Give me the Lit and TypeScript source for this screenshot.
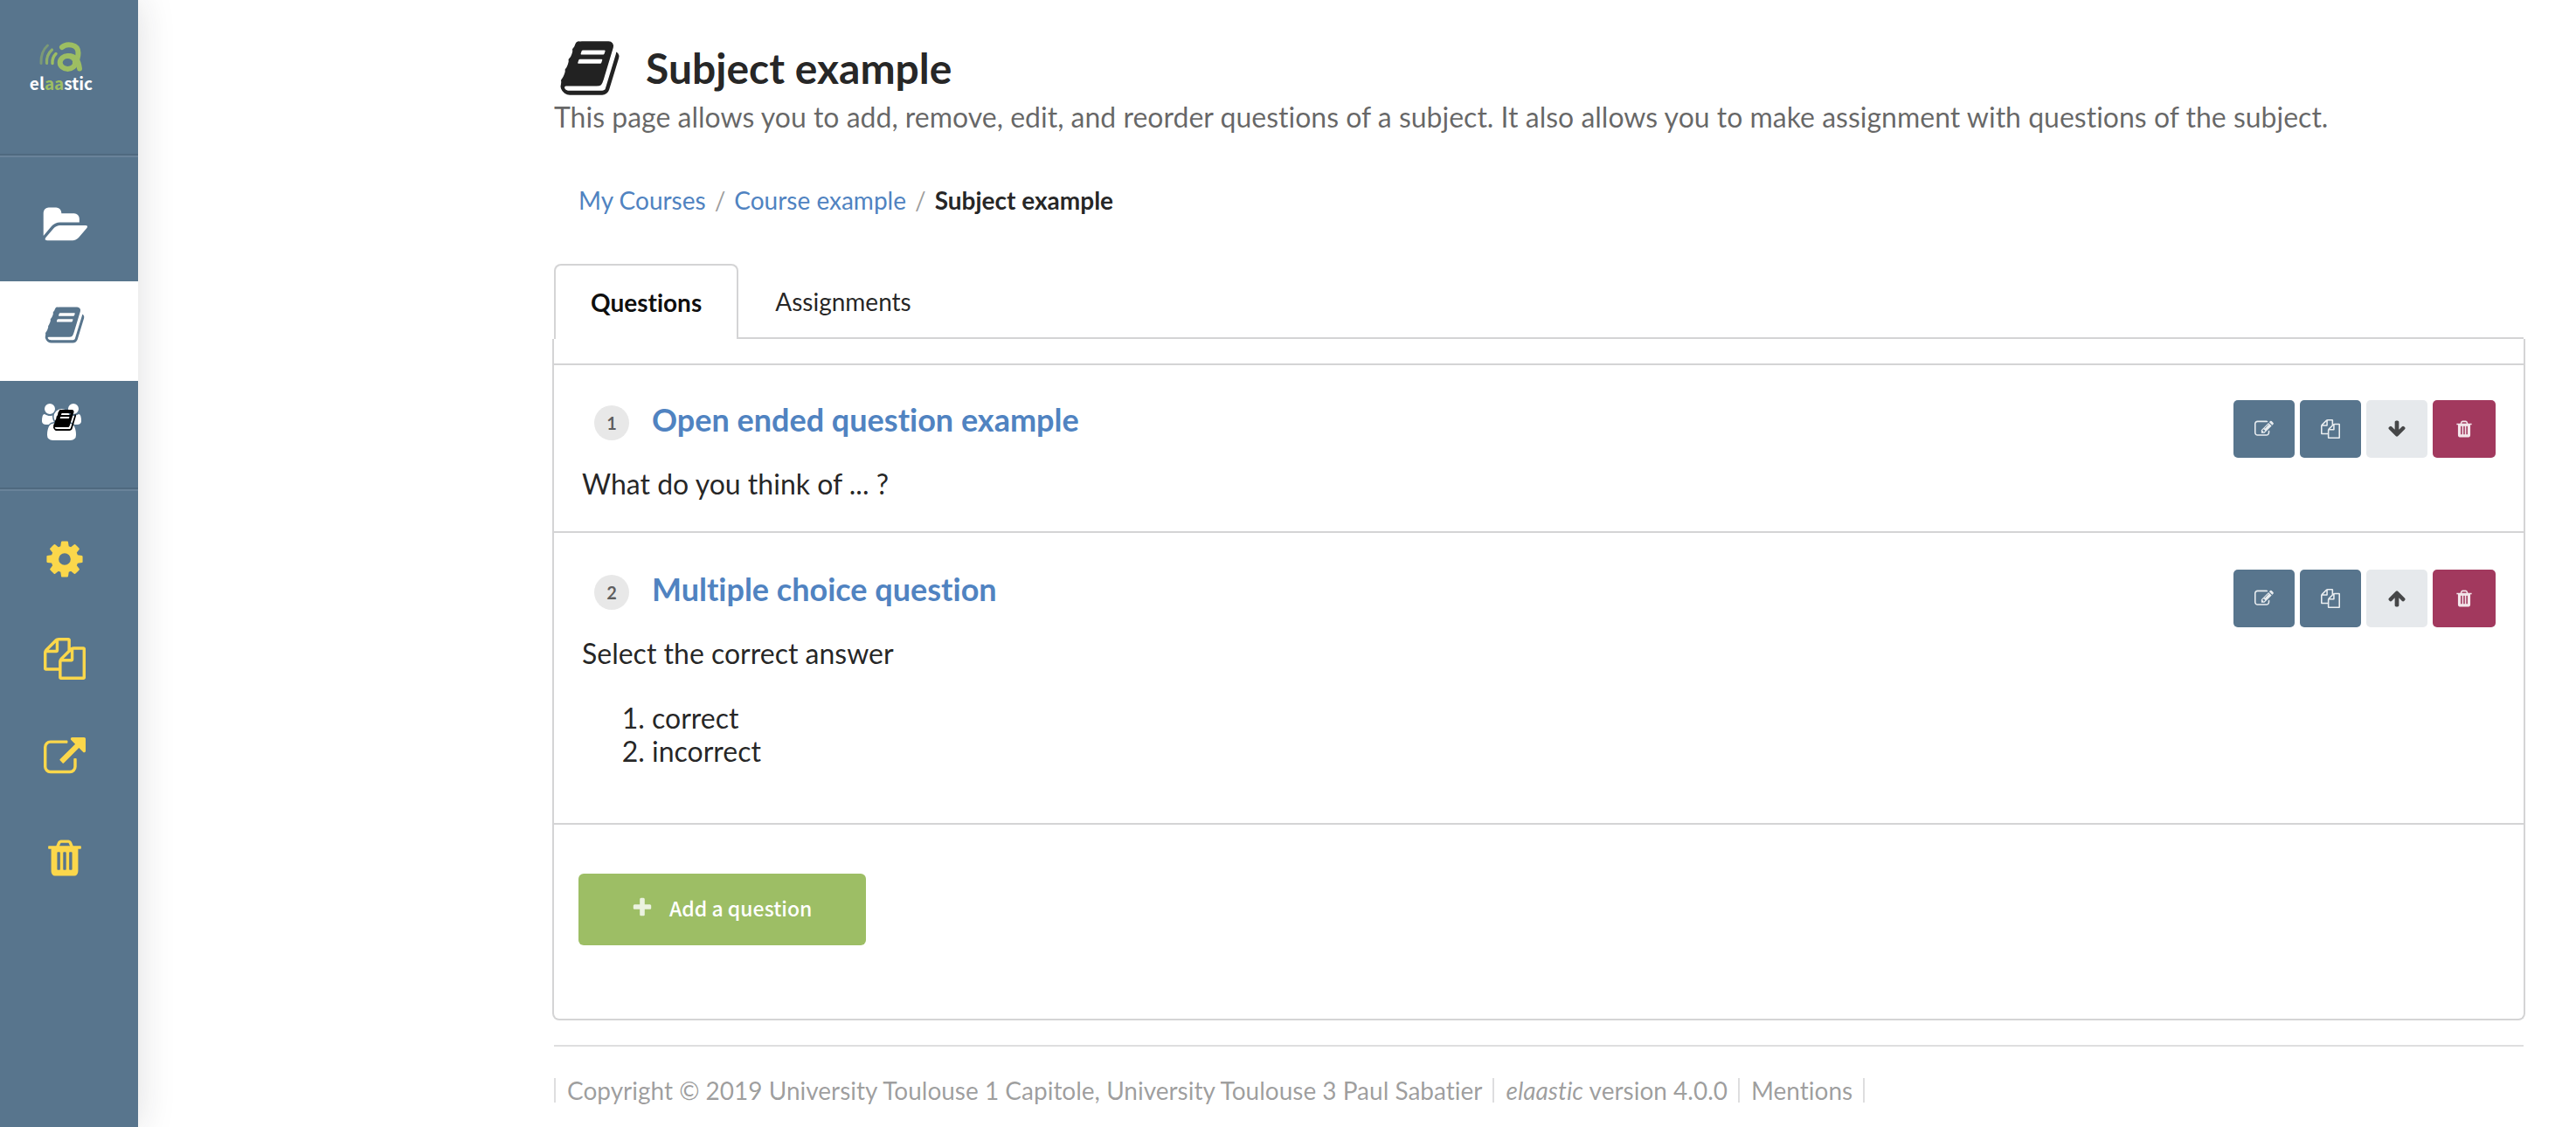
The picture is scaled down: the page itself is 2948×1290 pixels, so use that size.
import { LitElement, html, css, svg, nothing } from "lit";
import { customElement, property } from "lit/decorators.js";

type Glyph = { box: string; path: string };

const BOOK =
  "M1703 478q40 57 18 129l-275 906q-19 64-76.5 107.5t-122.5 43.5h-923q-77 0-148.5-53.5t-99.5-131.5q-24-67-2-127 0-4 3-27t4-37q1-8-3-21.5t-3-19.5q2-11 8-21t16.5-23.5 16.5-23.5q23-38 45-91.5t30-91.5q3-10 .5-30t-.5-28q3-11 17-28t17-23q21-36 42-92t25-90q1-9-2.5-32t.5-28q4-13 22-30.5t22-22.5q19-26 42.5-84.5t27.5-96.5q1-8-3-25.5t-2-26.5q2-8 9-18t18-23 17-21q8-12 16.5-30.5t15-35 16-36 19.5-32 26.5-23.5 36-11.5 47.5 5.5l-1 3q38-9 51-9h761q74 0 114 56t18 130l-274 906q-36 119-71.5 153.5t-128.5 34.5h-869q-27 0-38 15-11 16-1 43 24 70 144 70h923q29 0 56-15.5t35-41.5l300-987q7-22 5-57 38 15 59 43zm-1064 2q-4 13 2 22.5t20 9.5h608q13 0 25.5-9.5t16.5-22.5l21-64q4-13-2-22.5t-20-9.5h-608q-13 0-25.5 9.5t-16.5 22.5zm-83 256q-4 13 2 22.5t20 9.5h608q13 0 25.5-9.5t16.5-22.5l21-64q4-13-2-22.5t-20-9.5h-608q-13 0-25.5 9.5t-16.5 22.5z";

const SQUARE = "0 0 1792 1792";

const GLYPHS: Record<string, Glyph> = {
  folder: {
    box: "0 0 1943 1792",
    path: "M1943 952q0 31-31 66l-336 396q-43 51-120.5 86.5t-143.5 35.5h-1088q-34 0-60.5-13t-26.5-43q0-31 31-66l336-396q43-51 120.5-86.5t143.5-35.5h1088q34 0 60.5 13t26.5 43zm-343-344v160h-832q-94 0-197 47.5t-164 119.5l-337 396-5 6q0-4-.5-12.5t-.5-12.5v-960q0-92 66-158t158-66h320q92 0 158 66t66 158v32h544q92 0 158 66t66 158z",
  },
  book: { box: SQUARE, path: BOOK },
  users: {
    box: "0 0 1920 1792",
    path: "M593 896q-162 5-265 128h-134q-82 0-138-40.5t-56-118.5q0-353 124-353 6 0 43.5 21t97.5 42.5 119 21.5q67 0 133-23-5 37-5 66 0 139 81 256zm1071 637q0 120-73 189.5t-194 69.5h-874q-121 0-194-69.5t-73-189.5q0-53 3.5-103.5t14-109 26.5-108.5 43-97.5 62-81 85.5-53.5 111.5-20q10 0 43 21.5t73 48 107 48 135 21.5 135-21.5 107-48 73-48 43-21.5q61 0 111.5 20t85.5 53.5 62 81 43 97.5 26.5 108.5 14 109 3.5 103.5zm-1024-1277q0 106-75 181t-181 75-181-75-75-181 75-181 181-75 181 75 75 181zm704 384q0 159-112.5 271.5t-271.5 112.5-271.5-112.5-112.5-271.5 112.5-271.5 271.5-112.5 271.5 112.5 112.5 271.5zm576 225q0 78-56 118.5t-138 40.5h-134q-103-123-265-128 81-117 81-256 0-29-5-66 66 23 133 23 59 0 119-21.5t97.5-42.5 43.5-21q124 0 124 353zm-128-609q0 106-75 181t-181 75-181-75-75-181 75-181 181-75 181 75 75 181z",
  },
  cog: {
    box: SQUARE,
    path: "M1152 896q0-106-75-181t-181-75-181 75-75 181 75 181 181 75 181-75 75-181zm512-109v222q0 12-8 23t-20 13l-185 28q-19 54-39 91 35 50 107 138 10 12 10 25t-9 23q-27 37-99 108t-94 71q-12 0-26-9l-138-108q-44 23-91 38-16 136-29 186-7 28-36 28h-222q-14 0-24.5-8.5t-11.5-21.5l-28-184q-49-16-90-37l-141 107q-10 9-25 9-14 0-25-11-126-114-165-168-7-10-7-23 0-12 8-23 15-21 51-66.5t54-70.5q-27-50-41-99l-183-27q-13-2-21-12.5t-8-23.5v-222q0-12 8-23t19-13l186-28q14-46 39-92-40-57-107-138-10-12-10-24 0-10 9-23 26-36 98.5-107.5t94.5-71.5q13 0 26 10l138 107q44-23 91-38 16-136 29-186 7-28 36-28h222q14 0 24.5 8.5t11.5 21.5l28 184q49 16 90 37l142-107q9-9 24-9 13 0 25 10 129 119 165 170 7 8 7 22 0 12-8 23-15 21-51 66.5t-54 70.5q26 50 41 98l183 28q13 2 21 12.5t8 23.5z",
  },
  copy: {
    box: SQUARE,
    path: "M1696 384q40 0 68 28t28 68v1216q0 40-28 68t-68 28h-960q-40 0-68-28t-28-68v-288h-544q-40 0-68-28t-28-68v-672q0-40 20-88t48-76l408-408q28-28 76-48t88-20h416q40 0 68 28t28 68v328q68-40 128-40h416zm-544 213l-299 299h299v-299zm-640-384l-299 299h299v-299zm196 647l316-316v-416h-384v416q0 40-28 68t-68 28h-416v640h512v-256q0-40 20-88t48-76zm956 804v-1152h-384v416q0 40-28 68t-68 28h-416v640h896z",
  },
  external: {
    box: SQUARE,
    path: "M1408 928v320q0 119-84.5 203.5t-203.5 84.5h-832q-119 0-203.5-84.5t-84.5-203.5v-832q0-119 84.5-203.5t203.5-84.5h704q14 0 23 9t9 23v64q0 14-9 23t-23 9h-704q-66 0-113 47t-47 113v832q0 66 47 113t113 47h832q66 0 113-47t47-113v-320q0-14 9-23t23-9h64q14 0 23 9t9 23zm384-864v512q0 26-19 45t-45 19-45-19l-176-176-652 652q-10 10-23 10t-23-10l-114-114q-10-10-10-23t10-23l652-652-176-176q-19-19-19-45t19-45 45-19h512q26 0 45 19t19 45z",
  },
  trash: {
    box: SQUARE,
    path: "M704 1376v-704q0-14-9-23t-23-9h-64q-14 0-23 9t-9 23v704q0 14 9 23t23 9h64q14 0 23-9t9-23zm256 0v-704q0-14-9-23t-23-9h-64q-14 0-23 9t-9 23v704q0 14 9 23t23 9h64q14 0 23-9t9-23zm256 0v-704q0-14-9-23t-23-9h-64q-14 0-23 9t-9 23v704q0 14 9 23t23 9h64q14 0 23-9t9-23zm-544-992h448l-48-117q-7-9-17-11h-317q-10 2-17 11zm928 32v64q0 14-9 23t-23 9h-96v948q0 83-47 143.5t-113 60.5h-832q-66 0-113-58.5t-47-141.5v-952h-96q-14 0-23-9t-9-23v-64q0-14 9-23t23-9h309l70-167q15-37 54-63t79-26h320q40 0 79 26t54 63l70 167h309q14 0 23 9t9 23z",
  },
  edit: {
    box: SQUARE,
    path: "M888 1184l116-116-152-152-116 116v56h96v96h56zm440-720q-16-16-33 1l-350 350q-17 17-1 33t33-1l350-350q17-17 1-33zm80 594v190q0 119-84.5 203.5t-203.5 84.5h-832q-119 0-203.5-84.5t-84.5-203.5v-832q0-119 84.5-203.5t203.5-84.5h832q63 0 117 25 15 7 18 23 3 17-9 29l-49 49q-14 14-32 8-23-6-45-6h-832q-66 0-113 47t-47 113v832q0 66 47 113t113 47h832q66 0 113-47t47-113v-126q0-13 9-22l64-64q15-15 35-7t20 29zm-96-738l288 288-672 672h-288v-288zm444 132l-92 92-288-288 92-92q28-28 68-28t68 28l152 152q28 28 28 68t-28 68z",
  },
  plus: {
    box: SQUARE,
    path: "M1600 736v192q0 40-28 68t-68 28h-416v416q0 40-28 68t-68 28h-192q-40 0-68-28t-28-68v-416h-416q-40 0-68-28t-28-68v-192q0-40 28-68t68-28h416v-416q0-40 28-68t68-28h192q40 0 68 28t28 68v416h416q40 0 68 28t28 68z",
  },
  down: {
    box: SQUARE,
    path: "M1675 832q0 53-37 90l-651 652q-39 37-91 37-53 0-90-37l-651-652q-38-36-38-90 0-53 38-91l74-75q39-37 91-37 53 0 90 37l294 294v-704q0-52 38-90t90-38h128q52 0 90 38t38 90v704l294-294q37-37 90-37 52 0 91 37l75 75q37 39 37 91z",
  },
  up: {
    box: SQUARE,
    path: "M1675 971q0 51-37 90l-75 75q-38 38-91 38-54 0-90-38l-294-293v704q0 52-37.5 84.5t-90.5 32.5h-128q-53 0-90.5-32.5t-37.5-84.5v-704l-294 293q-36 38-90 38t-90-38l-75-75q-38-38-38-90 0-53 38-91l651-651q35-37 90-37 54 0 91 37l651 651q37 39 37 91z",
  },
};

const icon = (name: string, cls = "") => {
  const g = GLYPHS[name];
  return html`<svg class="icon ${cls}" viewBox=${g.box} aria-hidden="true">
    ${svg`<path d=${g.path}></path>`}
  </svg>`;
};

interface Question {
  rank: number;
  title: string;
  text: string;
  choices?: string[];
  move: "up" | "down";
}

const QUESTIONS: Question[] = [
  { rank: 1, title: "Open ended question example", text: "What do you think of ... ?", move: "down" },
  {
    rank: 2,
    title: "Multiple choice question",
    text: "Select the correct answer",
    choices: ["correct", "incorrect"],
    move: "up",
  },
];

@customElement("side-bar")
class SideBar extends LitElement {
  static styles = css`
    :host {
      display: block;
      background: #58758d;
      box-shadow: 0 0 40px rgba(34, 36, 38, 0.15);
      font-family: "Noto Sans CJK SC", "Noto Sans", sans-serif;
    }
    .logo {
      display: block;
      height: 176px;
    }
    .logo svg {
      display: block;
      width: 158px;
      height: 120px;
    }
    .section {
      display: flex;
      flex-direction: column;
      padding: 28px 0 8px;
      border-top: 2px solid #4f697f;
      box-shadow: inset 0 2px 0 #69839a;
    }
    .section::before {
      content: "";
      height: 2px;
    }
    .item {
      position: relative;
      display: block;
      box-sizing: border-box;
      height: 114px;
      padding: 26px 50px 40px;
      border: 0;
      background: none;
      color: #fff;
      cursor: pointer;
      text-align: left;
    }
    .item.active {
      background: #fff;
      color: #58758d;
    }
    .item.tool {
      color: #fbd74b;
    }
    .item.wide {
      padding-left: 48px;
    }
    .icon {
      display: block;
      width: 48px;
      height: 48px;
      fill: currentColor;
    }
    .icon.folder {
      width: 52px;
    }
    .icon.users {
      width: 45px;
      height: 42px;
    }
    .icon.corner {
      position: absolute;
      left: 60px;
      top: 31px;
      width: 28px;
      height: 28px;
      color: #000;
    }
    .mark {
      font-size: 19px;
      font-weight: 700;
      fill: #fff;
    }
    .accent {
      fill: #9dbe62;
    }
  `;

  render() {
    return html`
      <a class="logo" href="#" aria-label="elaastic">
        <svg viewBox="0 0 158 120">
          <g fill="none" stroke="#9dbe62" stroke-linecap="round">
            <path d="M47 72.500C46.500 64 49 57 54.500 52" stroke-width="3" opacity="0.5"></path>
            <path d="M53.500 72.500C53 66 55 61 59.500 57" stroke-width="3.200" opacity="0.8"></path>
            <path d="M60 72.500C59.700 68 61 64.500 64 61.500" stroke-width="3.400"></path>
            <ellipse cx="77.500" cy="71.500" rx="8.800" ry="7.500" stroke-width="6"></ellipse>
            <path d="M71 54C76 49.500 89.500 50 89.500 60.500C89.500 66 88 69 86 71.500" stroke-width="6"></path>
            <path d="M78 64C87 64 90 70 91 78.500" stroke-width="6"></path>
          </g>
          <text class="mark" x="70" y="103" text-anchor="middle">el<tspan class="accent">aa</tspan>stic</text>
        </svg>
      </a>
      <nav class="section" aria-label="Main">
        <a class="item wide" href="#" aria-label="Courses">${icon("folder", "folder")}</a>
        <a class="item active" href="#" aria-label="Subjects">${icon("book")}</a>
        <a class="item wide" href="#" aria-label="Assignments">
          ${icon("users", "users")}${icon("book", "corner")}
        </a>
      </nav>
      <div class="section">
        <button class="item tool" aria-label="Settings">${icon("cog")}</button>
        <button class="item tool" aria-label="Duplicate">${icon("copy")}</button>
        <button class="item tool" aria-label="Share">${icon("external")}</button>
        <button class="item tool" aria-label="Delete">${icon("trash")}</button>
      </div>
    `;
  }
}

@customElement("question-row")
class QuestionRow extends LitElement {
  @property({ attribute: false }) question!: Question;

  static styles = css`
    :host {
      display: block;
      padding: 40px 32px 35px;
      border-top: 2px solid #d4d4d5;
      color: rgba(0, 0, 0, 0.87);
    }
    .head {
      display: flex;
      align-items: flex-start;
      height: 77px;
    }
    .rank {
      width: 40px;
      height: 40px;
      margin: 6px 26px 0 14px;
      border-radius: 50%;
      background: #e8e8e8;
      color: rgba(0, 0, 0, 0.6);
      font-size: 20px;
      font-weight: 700;
      line-height: 40px;
      text-align: center;
    }
    .title {
      flex: 1;
      margin: 0;
      font-size: 36px;
      line-height: 44px;
    }
    .title a {
      color: #5083c1;
      text-decoration: none;
    }
    .actions {
      display: flex;
      gap: 6px;
    }
    .action {
      display: flex;
      align-items: center;
      justify-content: center;
      width: 70px;
      height: 66px;
      padding: 0;
      border: 0;
      border-radius: 5px;
      background: #58758d;
      color: rgba(255, 255, 255, 0.87);
      cursor: pointer;
    }
    .action.move {
      background: #e6e9ec;
      color: #464748;
    }
    .action.delete {
      width: 72px;
      background: #a2395e;
    }
    .icon {
      width: 22px;
      height: 22px;
      fill: currentColor;
    }
    .text {
      margin: 0;
      font-size: 32px;
      line-height: 38px;
    }
    .choices {
      margin: 36px 0 28px;
      padding-left: 80px;
      font-size: 32px;
      line-height: 38px;
    }
  `;

  render() {
    const q = this.question;
    return html`
      <div class="head">
        <span class="rank">${q.rank}</span>
        <h2 class="title"><a href="#">${q.title}</a></h2>
        <div class="actions">
          <button class="action" aria-label="Edit">${icon("edit")}</button>
          <button class="action" aria-label="Duplicate">${icon("copy")}</button>
          <button class="action move" aria-label="Move ${q.move}">${icon(q.move)}</button>
          <button class="action delete" aria-label="Delete">${icon("trash")}</button>
        </div>
      </div>
      <p class="text">${q.text}</p>
      ${q.choices
        ? html`<ol class="choices">
            ${q.choices.map((c) => html`<li>${c}</li>`)}
          </ol>`
        : nothing}
    `;
  }
}

@customElement("app-root")
class AppRoot extends LitElement {
  static styles = css`
    :host {
      display: grid;
      grid-template-columns: 158px minmax(0, 1fr);
      min-height: 100vh;
      background: #fff;
      color: rgba(0, 0, 0, 0.87);
      font-family: Lato, "Open Sans", sans-serif;
      font-size: 28px;
      font-variant-ligatures: none;
      line-height: 40px;
    }
    a {
      color: #5083c1;
      text-decoration: none;
    }
    .page {
      padding: 42px 60px 28px 476px;
    }
    .heading {
      display: flex;
      align-items: center;
      gap: 28px;
      padding-left: 5px;
    }
    .heading .icon {
      width: 72px;
      height: 72px;
      fill: #222;
    }
    .title {
      margin: 0;
      font-size: 48px;
      line-height: 60px;
    }
    .lead {
      margin: 0;
      color: rgba(0, 0, 0, 0.6);
      font-size: 32px;
    }
    .crumbs {
      display: flex;
      gap: 10px;
      padding: 55px 28px 53px;
    }
    .slash {
      color: rgba(0, 0, 0, 0.4);
    }
    .tabs {
      display: flex;
      border-bottom: 2px solid #d4d4d5;
    }
    .tab {
      height: 86px;
      margin-bottom: -2px;
      padding: 0 42px;
      border: 0;
      background: none;
      color: inherit;
      font: inherit;
      font-variant-ligatures: none;
      cursor: pointer;
    }
    .tab.active {
      padding: 0 40px;
      border: 2px solid #d4d4d5;
      border-bottom: 0;
      border-radius: 8px 8px 0 0;
      background: #fff;
      color: rgba(0, 0, 0, 0.95);
      font-weight: 700;
    }
    .panel {
      margin: 0 -2px;
      padding-top: 28px;
      border: 2px solid #d4d4d5;
      border-top: 0;
      border-radius: 0 0 8px 8px;
    }
    question-row + question-row {
      padding-top: 42px;
    }
    .add-row {
      padding: 56px 28px 84px;
      border-top: 2px solid #d4d4d5;
    }
    .add {
      display: flex;
      align-items: center;
      gap: 18px;
      height: 82px;
      padding: 0 62px 4px 60px;
      border: 0;
      border-radius: 6px;
      background: #9dbe65;
      color: #fff;
      font-family: "Noto Sans CJK SC", "Noto Sans", sans-serif;
      font-size: 23px;
      font-weight: 500;
      line-height: 30px;
      cursor: pointer;
    }
    .add .icon {
      width: 26px;
      height: 26px;
      fill: rgba(255, 255, 255, 0.8);
    }
    .footer {
      margin-top: 28px;
      padding-top: 36px;
      border-top: 2px solid #dededf;
    }
    .links {
      display: flex;
      margin: 0;
      padding: 0;
      border-left: 2px solid #dededf;
      list-style: none;
      color: rgba(0, 0, 0, 0.4);
      line-height: 28px;
    }
    .link {
      padding: 0 12px 0 13px;
      border-right: 2px solid #dededf;
    }
    .link a {
      color: inherit;
    }
  `;

  render() {
    return html`
      <side-bar></side-bar>
      <main class="page">
        <header>
          <div class="heading">
            ${icon("book")}
            <h1 class="title">Subject example</h1>
          </div>
          <p class="lead">
            This page allows you to add, remove, edit, and reorder questions of a subject. It also allows you to make
            assignment with questions of the subject.
          </p>
        </header>
        <nav class="crumbs" aria-label="Breadcrumb">
          <a href="#">My Courses</a>
          <span class="slash">/</span>
          <a href="#">Course example</a>
          <span class="slash">/</span>
          <strong>Subject example</strong>
        </nav>
        <div class="tabs" role="tablist">
          <button class="tab active" role="tab" aria-selected="true">Questions</button>
          <button class="tab" role="tab" aria-selected="false">Assignments</button>
        </div>
        <section class="panel">
          ${QUESTIONS.map((q) => html`<question-row .question=${q}></question-row>`)}
          <div class="add-row">
            <button class="add">${icon("plus")}<span>Add a question</span></button>
          </div>
        </section>
        <footer class="footer">
          <ul class="links">
            <li class="link">Copyright © 2019 University Toulouse 1 Capitole, University Toulouse 3 Paul Sabatier</li>
            <li class="link"><em>elaastic</em> version 4.0.0</li>
            <li class="link"><a href="#">Mentions</a></li>
          </ul>
        </footer>
      </main>
    `;
  }
}
